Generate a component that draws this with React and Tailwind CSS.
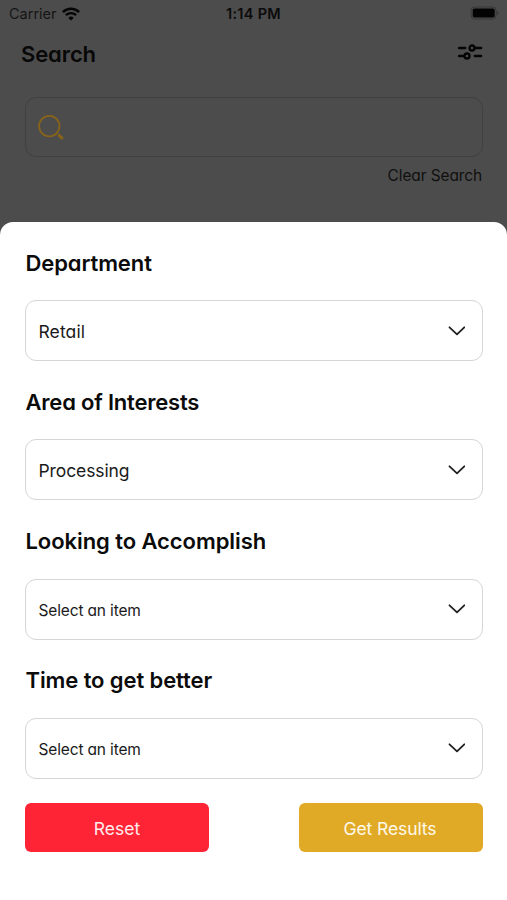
import React from "react";

const FIELDS = [
  { label: "Department", labelStyle: "tracking-[-0.1px]", value: "Retail", valueStyle: "text-[17.5px] tracking-[0.1px]" },
  { label: "Area of Interests", labelStyle: "tracking-[-0.2px]", value: "Processing", valueStyle: "text-[17.5px] tracking-[-0.1px]" },
  { label: "Looking to Accomplish", labelStyle: "tracking-[-0.07px]", value: "Select an item", valueStyle: "text-[15.5px] tracking-[-0.15px]" },
  { label: "Time to get better", labelStyle: "tracking-[-0.1px]", value: "Select an item", valueStyle: "text-[15.5px] tracking-[-0.15px]" },
];

const App = () => {
  return (
    <div className="flex h-[900px] w-[507px] flex-col overflow-hidden bg-[#4c4c4c] font-['Inter',sans-serif] [font-feature-settings:'cv11']">
      <div className="h-[222px] shrink-0">
        <StatusBar />

        {/* Title row */}
        <div className="flex h-[52px] items-center justify-between pl-[21px] pr-6">
          <h1 className="text-[22px] font-semibold leading-none tracking-[-0.1px] text-[#080808]">
            <span>Search</span>
          </h1>
          <div className="pb-[4px]">
            <FilterIcon />
          </div>
        </div>

        {/* Search box */}
        <div className="ml-[25px] mr-6 mt-[17px] flex h-[60px] items-center rounded-[11px] border border-[#404040] pl-[12px]">
          <SearchIcon />
        </div>
        <p className="mr-[25px] mt-[10px] text-right text-[15.5px] leading-[18px] tracking-[-0.12px] text-[#101010]">
          <span>Clear Search</span>
        </p>
      </div>

      {/* Filter sheet */}
      <div className="flex-1 rounded-t-[13px] bg-white pl-[25px] pr-6">
        {FIELDS.map((field) => (
          <Field key={field.label} {...field} />
        ))}

        <div className="mt-[24px] flex justify-between">
          <button className="h-[49px] w-[184px] rounded-[6px] bg-[#ff2435] pt-[3px] text-[17.5px] text-[#ffeced]">
            <span>Reset</span>
          </button>
          <button className="h-[49px] w-[184px] rounded-[6px] bg-[#e1aa26] pt-[3px] pr-[2px] text-[17.5px] tracking-[-0.1px] text-[#fff9ea]">
            <span>Get Results</span>
          </button>
        </div>
      </div>
    </div>
  );
};

// ---------------------- COMPONENTS --------------------------

const StatusBar = () => (
  <div className="grid h-[28px] grid-cols-[1fr_auto_1fr] items-center pl-[9px] pr-[7px] text-[14.5px] leading-none">
    <div className="flex items-center gap-[5px] text-[#151515] [font-feature-settings:normal]">
      <span>Carrier</span>
      <WifiIcon />
    </div>
    <span className="pr-[2px] text-center font-semibold tracking-[0.3px] text-[#0b0b0b] [font-feature-settings:normal]">
      1:14 PM
    </span>
    <div className="flex justify-end pb-[2px]">
      <BatteryIcon />
    </div>
  </div>
);

const Field = ({ label, labelStyle, value, valueStyle }) => (
  <div>
    <h2
      className={`flex h-[78.2px] items-center pl-[0.5px] pt-[3px] text-[22px] font-semibold leading-none text-[#0b0b0b] ${labelStyle}`}
    >
      <span>{label}</span>
    </h2>
    <div className="flex h-[61px] items-center justify-between rounded-[11px] border-[1.5px] border-[#d6d6d6] pl-[12.5px] pr-[17px] text-[#1a1a1a]">
      <span className={`pt-[2.5px] leading-none ${valueStyle}`}>{value}</span>
      <ChevronIcon />
    </div>
  </div>
);

// ---------------------- ICONS --------------------------

const ChevronIcon = () => (
  <svg width="17" height="10" viewBox="0 0 17 10" fill="none" stroke="#202020" strokeWidth="1.8" strokeLinecap="round" strokeLinejoin="round">
    <path d="M1.5 1.3 9 8.4l7.3-7.1" />
  </svg>
);

const WifiIcon = () => (
  <svg width="18" height="14" viewBox="0 0 18 14" fill="none" stroke="#050505" strokeWidth="2.4">
    <path d="M.9 5.1a11.5 11.5 0 0 1 16.2 0" />
    <path d="M3.9 8.2a7.2 7.2 0 0 1 10.2 0" />
    <path d="M9 13.6 6.3 10.9a3.8 3.8 0 0 1 5.4 0Z" fill="#050505" stroke="none" />
  </svg>
);

const BatteryIcon = () => (
  <svg width="30" height="14" viewBox="0 0 30 14">
    <rect x="1.2" y="1" width="25" height="12" rx="3.5" fill="none" stroke="#363636" strokeWidth="1" />
    <rect x="2.7" y="2.5" width="22" height="9" rx="1.8" fill="#030303" />
    <path d="M27.5 5v4a2.3 2.3 0 0 0 0-4Z" fill="#303030" />
  </svg>
);

const FilterIcon = () => (
  <svg width="25" height="18" viewBox="0 0 25 18" fill="none" stroke="#040404" strokeWidth="2.3" strokeLinecap="round">
    <path d="M1 5h6.2M17 5h6.2M1 13h5M16.7 13h6.5" />
    <circle cx="14" cy="5" r="2.5" />
    <circle cx="9" cy="13" r="2.5" />
  </svg>
);

const SearchIcon = () => (
  <svg width="27" height="27" viewBox="0 0 27 27" fill="none" stroke="#87641a">
    <circle cx="11.3" cy="12.1" r="10.2" strokeWidth="1.8" />
    <path d="m20.2 20.6 4.6 4.2" strokeWidth="3" />
  </svg>
);

export default App;
